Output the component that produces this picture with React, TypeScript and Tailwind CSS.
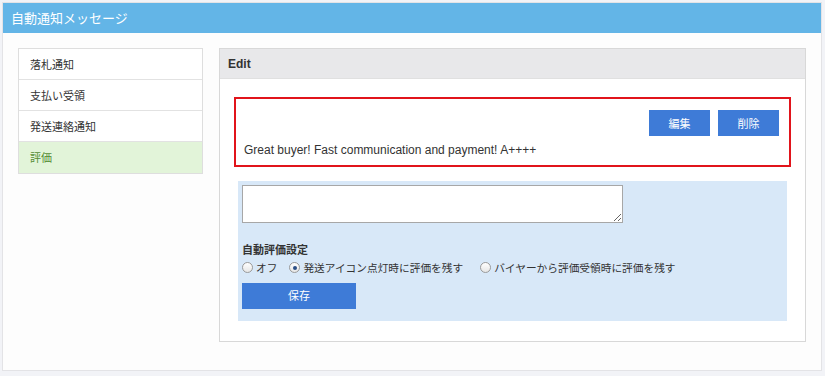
const jp = "font-['Noto_Sans_CJK_JP','Liberation_Sans',sans-serif]";

const menu = ['落札通知', '支払い受領', '発送連絡通知', '評価'];

function Radio({ checked, label }: { checked?: boolean; label: string }) {
  return (
    <label className="flex items-center gap-[3px]">
      <span className="flex size-[11px] items-center justify-center rounded-full border border-[#9a9a9a] bg-gradient-to-b from-white to-[#e6e6e6]">
        {checked && <span className="size-[4px] rounded-full bg-[#2b4f86]" />}
      </span>
      <span>{label}</span>
    </label>
  );
}

export default function App() {
  return (
    <div className={`h-[376px] w-[825px] bg-[#f2f3f7] pl-[2px] pt-[2px] ${jp}`}>
      <div className="h-[369px] w-[820px] border border-[#e3e3e6] bg-[#fdfdfd]">
        <div className="flex h-[30px] items-center bg-[#63b5e7] pl-[8px] text-[13px] text-white">
          自動通知メッセージ
        </div>
        <div className="flex gap-[16px] px-[15px] pt-[15px]">
          <ul className="w-[186px] self-start border border-[#dedede] bg-white">
            {menu.map((m, i) => (
              <li
                key={m}
                className={`flex h-[31px] items-center pl-[11px] text-[11px] ${
                  i < menu.length - 1 ? 'border-b border-[#e2e2e2]' : ''
                } ${i === 3 ? 'bg-[#e2f4d9] text-[#558d35]' : 'text-[#333]'}`}
              >
                {m}
              </li>
            ))}
          </ul>
          <div className="h-[294px] w-[588px] border border-[#d8d8d8] bg-white">
            <div className="flex h-[30px] items-center border-b border-[#e0e0e0] bg-[#e8e8ea] pl-[8px] font-['Liberation_Sans',sans-serif] text-[12px] font-bold text-[#333]">
              Edit
            </div>
            <div className="px-[14px] pt-[18px]">
              <div className="h-[70px] w-[557px] border-2 border-[#e1141b] pl-[8px] pr-[10px] pt-[11px]">
                <div className="flex justify-end gap-[8px]">
                  <button className="h-[26px] w-[61px] bg-[#3e7bd7] text-[11px] text-white">編集</button>
                  <button className="h-[26px] w-[61px] bg-[#3e7bd7] text-[11px] text-white">削除</button>
                </div>
                <p className="mt-[5px] font-['Liberation_Sans',sans-serif] text-[12px] text-[#333]">
                  Great buyer! Fast communication and payment! A++++
                </p>
              </div>
              <div className="ml-[4px] mt-[14px] h-[140px] w-[549px] bg-[#d8e8f8] p-[4px]">
                <textarea className="block h-[38px] w-[381px] border border-[#a7a7a7] bg-white" />
                <div className="mt-[18px] text-[11px] font-bold text-[#333]">自動評価設定</div>
                <div className="mt-[2px] flex items-center text-[10.7px] text-[#333]">
                  <Radio label="オフ" />
                  <span className="w-[12px]" />
                  <Radio checked label="発送アイコン点灯時に評価を残す" />
                  <span className="w-[17px]" />
                  <Radio label="バイヤーから評価受領時に評価を残す" />
                </div>
                <button className="mt-[7px] h-[26px] w-[114px] bg-[#3e7bd7] text-[11px] text-white">保存</button>
              </div>
            </div>
          </div>
        </div>
      </div>
    </div>
  );
}
